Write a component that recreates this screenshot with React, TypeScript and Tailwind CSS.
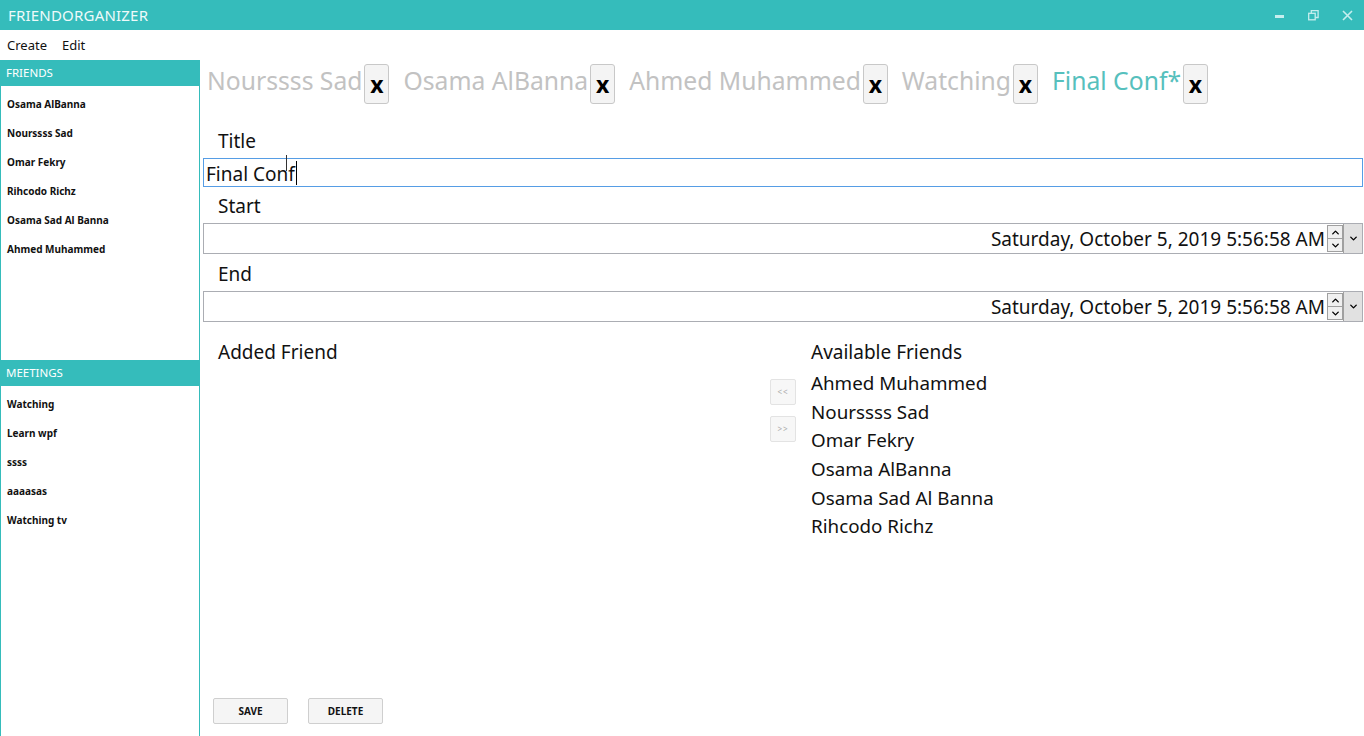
import { ChevronDown, ChevronUp } from "lucide-react";

const FRIENDS = ["Osama AlBanna", "Nourssss Sad", "Omar Fekry", "Rihcodo Richz", "Osama Sad Al Banna", "Ahmed Muhammed"];
const MEETINGS = ["Watching", "Learn wpf", "ssss", "aaaasas", "Watching tv"];
const TABS = ["Nourssss Sad", "Osama AlBanna", "Ahmed Muhammed", "Watching"];
const AVAILABLE = ["Ahmed Muhammed", "Nourssss Sad", "Omar Fekry", "Osama AlBanna", "Osama Sad Al Banna", "Rihcodo Richz"];

const FONT = { fontFamily: '"Noto Sans", "Open Sans", sans-serif' };

function TabClose() {
  return (
    <button className="ml-[2px] h-[40px] w-[25px] rounded-[3px] border border-[#c8c8c8] bg-[#f4f4f4] text-[23px] font-bold leading-none text-black">
      x
    </button>
  );
}

function DatePicker() {
  return (
    <div className="flex h-[31px] items-stretch border border-[#abadb3] bg-white">
      <div className="flex flex-1 items-center justify-end pr-[2px] pt-[1px] text-[19px] text-[#111]">
        Saturday, October 5, 2019 5:56:58 AM
      </div>
      <div className="my-[1px] flex w-[16px] flex-col border border-[#a0a0a0] bg-[#f0f0f0]">
        <div className="flex flex-1 items-center justify-center border-b border-[#a0a0a0]">
          <ChevronUp size={11} strokeWidth={3} />
        </div>
        <div className="flex flex-1 items-center justify-center">
          <ChevronDown size={11} strokeWidth={3} />
        </div>
      </div>
      <div className="flex w-[19px] items-center justify-center border-l border-[#a0a0a0] bg-[#e1e1e1]">
        <ChevronDown size={11} strokeWidth={3} />
      </div>
    </div>
  );
}

function SideList({ items }: { items: string[] }) {
  return (
    <ul className="pt-[4px]">
      {items.map((name) => (
        <li key={name} className="flex h-[29px] items-center pl-[6px] text-[10px] font-bold text-[#111]">
          {name}
        </li>
      ))}
    </ul>
  );
}

export default function App() {
  return (
    <div className="flex h-[736px] w-[1364px] flex-col overflow-hidden bg-white" style={FONT}>
      {/* title bar */}
      <div className="flex h-[30px] items-center bg-[#35bcbb] pl-[8px] text-white">
        <span className="text-[15px] tracking-[0.2px] text-[#eefafa]">FRIENDORGANIZER</span>
        <div className="ml-auto flex items-center">
          <div className="flex h-[30px] w-[34px] items-center justify-center">
            <div className="mt-[3px] h-[3px] w-[9px] bg-[#c6eeee]" />
          </div>
          <div className="flex h-[30px] w-[34px] items-center justify-center">
            <svg width="11" height="11" viewBox="0 0 11 11" fill="none" stroke="#c6eeee" strokeWidth="1.3">
              <rect x="0.7" y="3.3" width="6.5" height="6.5" />
              <path d="M3.3 3.3V0.7h6.8v6.8H7.2" />
            </svg>
          </div>
          <div className="flex h-[30px] w-[34px] items-center justify-center">
            <svg width="11" height="11" viewBox="0 0 11 11" stroke="#c6eeee" strokeWidth="1.6">
              <path d="M1 1l9 9M10 1l-9 9" />
            </svg>
          </div>
        </div>
      </div>

      {/* menu */}
      <div className="flex h-[30px] items-center gap-[15px] pl-[7px] pt-[1px] text-[13px] text-[#111]">
        <span>Create</span>
        <span>Edit</span>
      </div>

      <div className="flex flex-1">
        {/* sidebar */}
        <aside className="flex w-[200px] flex-col border-x border-[#35bcbb]">
          <div className="-mx-px flex h-[26px] items-center bg-[#35bcbb] pl-[6px] text-[11.5px] text-white">FRIENDS</div>
          <div className="h-[274px]">
            <SideList items={FRIENDS} />
          </div>
          <div className="-mx-px flex h-[26px] items-center bg-[#35bcbb] pl-[6px] text-[11.5px] text-white">MEETINGS</div>
          <SideList items={MEETINGS} />
        </aside>

        {/* main */}
        <main className="flex flex-1 flex-col pl-[3px] pr-[1px]">
          <div className="flex h-[44px] items-center gap-[14px] pl-[4px] pt-[4px]">
            {TABS.map((t) => (
              <div key={t} className="flex items-center">
                <span className="pb-[6px] text-[24.7px] leading-none text-[#c2c2c2]">{t}</span>
                <TabClose />
              </div>
            ))}
            <div className="flex items-center">
              <span className="pb-[6px] text-[24.7px] leading-none text-[#56c0bd]">Final Conf*</span>
              <TabClose />
            </div>
          </div>

          <div className="mt-[25px] pl-[15px] text-[19px] leading-[24px] text-[#111]">Title</div>
          <div className="mt-[5px] flex h-[29px] items-center border border-[#569de5] pl-[2px] pt-[4px] text-[19px] text-[#111]">
            <span className="relative">
              Final Conf
              <span className="absolute -right-[2px] top-[1px] h-[24px] w-px bg-black" />
              <span className="absolute left-[80px] -top-[5px] h-[16px] w-px bg-[#333]" />
            </span>
          </div>

          <div className="mt-[7px] pl-[15px] text-[19px] leading-[24px] text-[#111]">Start</div>
          <div className="mt-[5px]">
            <DatePicker />
          </div>

          <div className="mt-[8px] pl-[15px] text-[19px] leading-[24px] text-[#111]">End</div>
          <div className="mt-[5px]">
            <DatePicker />
          </div>

          <div className="mt-[18px] flex flex-1">
            <div className="w-[567px] pl-[15px] text-[19px] leading-[24px] text-[#111]">Added Friend</div>
            <div className="flex flex-col gap-[11px] pt-[39px]">
              <button className="flex h-[26px] w-[26px] items-center justify-center rounded-[2px] border border-[#e3e3e3] bg-[#f7f7f7] text-[8px] tracking-[1px] text-[#aaa]">
                &lt;&lt;
              </button>
              <button className="flex h-[26px] w-[26px] items-center justify-center rounded-[2px] border border-[#e3e3e3] bg-[#f7f7f7] text-[8px] tracking-[1px] text-[#aaa]">
                &gt;&gt;
              </button>
            </div>
            <div className="pl-[15px] text-[#111]">
              <div className="text-[19px] leading-[24px]">Available Friends</div>
              <ul className="mt-[5px]">
                {AVAILABLE.map((a) => (
                  <li key={a} className="h-[28.7px] text-[18.8px] leading-[28px]">
                    {a}
                  </li>
                ))}
              </ul>
            </div>
          </div>

          <div className="flex gap-[20px] pb-[12px] pl-[10px]">
            <button className="h-[26px] w-[75px] rounded-[2px] border border-[#cfcfcf] bg-[#f5f5f5] text-[10px] font-bold text-[#111]">
              SAVE
            </button>
            <button className="h-[26px] w-[75px] rounded-[2px] border border-[#cfcfcf] bg-[#f5f5f5] text-[10px] font-bold text-[#111]">
              DELETE
            </button>
          </div>
        </main>
      </div>
    </div>
  );
}
